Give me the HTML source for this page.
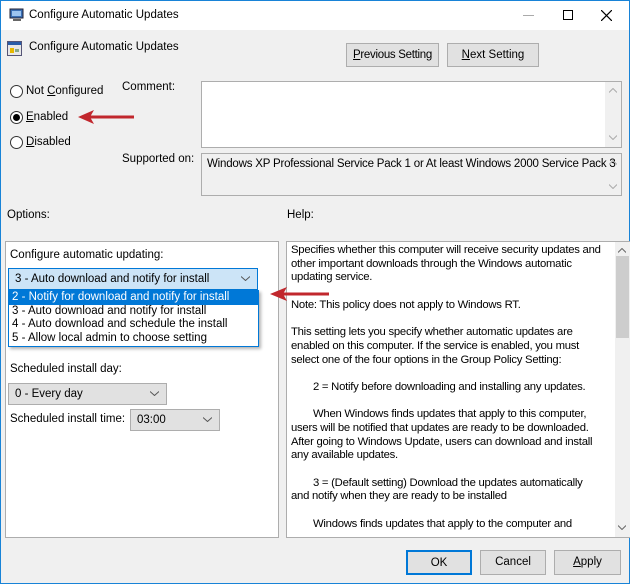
<!DOCTYPE html>
<html><head><style>
*{box-sizing:border-box}
body{margin:0;width:630px;height:584px;overflow:hidden;font-family:"Liberation Sans",sans-serif;font-size:11.5px;color:#000;background:#f0f0f0}
.a{position:absolute;white-space:nowrap}
.win{position:absolute;left:0;top:0;width:630px;height:584px;border:1px solid #1883d7;background:#f0f0f0}
.title{position:absolute;left:0;top:0;width:628px;height:29px;background:#fff}
.btn{position:absolute;background:#e1e1e1;border:1px solid #adadad;text-align:center;line-height:22px}
.box{position:absolute;border:1px solid #adadad;background:#fff;overflow:hidden}
.radio{position:absolute;width:13px;height:13px;border:1px solid #333;border-radius:50%;background:#fff}
.sel{position:absolute;background:#e1e1e1;border:1px solid #adadad;padding-left:6px;line-height:20px;white-space:nowrap}
.chev{position:absolute;right:7px;top:7px}
u{text-decoration:underline}
.help div{height:13.7px;line-height:13.7px;white-space:nowrap}
.in{padding-left:22px}
</style></head><body>
<div class="win">
<div class="title"></div>
<svg class="a" style="left:8px;top:7px" width="16" height="14"><rect x="1" y="1" width="13" height="9" fill="#3a6fb5" stroke="#223" stroke-width="1"/><rect x="3" y="3" width="9" height="5" fill="#9cc4f0"/><rect x="4" y="11" width="8" height="2" fill="#666"/></svg>
<div class="a" style="left:28px;top:8px">Configure Automatic Updates</div>
<div class="a" style="left:522px;top:14px;width:11px;border-top:1px solid #aaa"></div>
<div class="a" style="left:562px;top:9px;width:10px;height:10px;border:1px solid #000"></div>
<svg class="a" style="left:600px;top:9px" width="11" height="11"><path d="M0 0L11 11M11 0L0 11" stroke="#000" stroke-width="1.2"/></svg>

<svg class="a" style="left:6px;top:40px" width="15" height="15"><rect x="0.5" y="0.5" width="14" height="14" fill="#e8e8e8" stroke="#557"/><rect x="1" y="1" width="13" height="3" fill="#2a5da8"/><rect x="3" y="7" width="4" height="5" fill="#e6b800"/><rect x="8" y="8" width="4" height="3" fill="#8a8"/></svg>
<div class="a" style="left:28px;top:40px">Configure Automatic Updates</div>
<div class="btn" style="left:345px;top:42px;width:93px;height:24px;letter-spacing:-0.3px"><u>P</u>revious Setting</div>
<div class="btn" style="left:446px;top:42px;width:92px;height:24px"><u>N</u>ext Setting</div>

<div class="radio" style="left:9px;top:84px"></div><div class="a" style="left:25px;top:84px">Not <u>C</u>onfigured</div>
<div class="radio" style="left:9px;top:110px"></div><div class="a" style="left:12px;top:113px;width:7px;height:7px;border-radius:50%;background:#000"></div><div class="a" style="left:25px;top:110px"><u>E</u>nabled</div>
<div class="radio" style="left:9px;top:135px"></div><div class="a" style="left:25px;top:135px"><u>D</u>isabled</div>
<svg class="a" style="left:75px;top:106px" width="60" height="20"><path d="M58 10H10" stroke="#c1272d" stroke-width="3"/><path d="M2 10L18 3L14 10L18 17Z" fill="#c1272d"/></svg>

<div class="a" style="left:121px;top:80px">Comment:</div>
<div class="box" style="left:200px;top:80px;width:421px;height:67px"><div class="a" style="right:0;top:0;width:16px;height:65px;background:#f0f0f0"></div><svg class="a" style="right:4px;top:6px" width="8" height="5"><path d="M0 4.5L4 .5L8 4.5" fill="none" stroke="#aaa"/></svg><svg class="a" style="right:4px;top:53px" width="8" height="5"><path d="M0 .5L4 4.5L8 .5" fill="none" stroke="#aaa"/></svg></div>
<div class="a" style="left:121px;top:152px">Supported on:</div>
<div class="box" style="left:200px;top:152px;width:421px;height:43px;background:#f0f0f0"><div class="a" style="left:5px;top:4px;letter-spacing:-0.2px">Windows XP Professional Service Pack 1 or At least Windows 2000 Service Pack 3</div><svg class="a" style="right:4px;top:6px" width="8" height="5"><path d="M0 4.5L4 .5L8 4.5" fill="none" stroke="#aaa"/></svg><svg class="a" style="right:4px;top:30px" width="8" height="5"><path d="M0 .5L4 4.5L8 .5" fill="none" stroke="#aaa"/></svg></div>

<div class="a" style="left:6px;top:208px">Options:</div>
<div class="a" style="left:286px;top:208px">Help:</div>

<div class="box" style="left:4px;top:240px;width:274px;height:297px"></div>
<div class="a" style="left:9px;top:248px">Configure automatic updating:</div>
<div class="sel" style="left:7px;top:267px;width:250px;height:22px;background:#cce4f7;border-color:#0078d7">3 - Auto download and notify for install<svg class="chev" width="9" height="5"><path d="M0 .5L4.5 4.5L9 .5" fill="none" stroke="#555"/></svg></div>
<div class="a" style="left:7px;top:289px;width:251px;height:57px;background:#fff;border:1px solid #0078d7;box-shadow:2px 2px 3px rgba(0,0,0,.3);line-height:13.7px">
<div style="background:#0078d7;color:#fff;padding-left:3px">2 - Notify for download and notify for install</div>
<div style="padding-left:3px">3 - Auto download and notify for install</div>
<div style="padding-left:3px">4 - Auto download and schedule the install</div>
<div style="padding-left:3px">5 - Allow local admin to choose setting</div></div>
<div class="a" style="left:9px;top:362px">Scheduled install day:</div>
<div class="sel" style="left:7px;top:382px;width:159px;height:22px">0 - Every day<svg class="chev" width="9" height="5"><path d="M0 .5L4.5 4.5L9 .5" fill="none" stroke="#555"/></svg></div>
<div class="a" style="left:9px;top:412px">Scheduled install time:</div>
<div class="sel" style="left:129px;top:408px;width:90px;height:22px">03:00<svg class="chev" width="9" height="5"><path d="M0 .5L4.5 4.5L9 .5" fill="none" stroke="#555"/></svg></div>

<div class="box" style="left:285px;top:240px;width:345px;height:297px">
<div class="a help" style="left:4px;top:2px;letter-spacing:-0.25px;font-size:11.3px">
<div>Specifies whether this computer will receive security updates and</div>
<div>other important downloads through the Windows automatic</div>
<div>updating service.</div><div></div>
<div>Note: This policy does not apply to Windows RT.</div><div></div>
<div>This setting lets you specify whether automatic updates are</div>
<div>enabled on this computer. If the service is enabled, you must</div>
<div>select one of the four options in the Group Policy Setting:</div><div></div>
<div class="in">2 = Notify before downloading and installing any updates.</div><div></div>
<div class="in">When Windows finds updates that apply to this computer,</div>
<div>users will be notified that updates are ready to be downloaded.</div>
<div>After going to Windows Update, users can download and install</div>
<div>any available updates.</div><div></div>
<div class="in">3 = (Default setting) Download the updates automatically</div>
<div>and notify when they are ready to be installed</div><div></div>
<div class="in">Windows finds updates that apply to the computer and</div>
</div>
<div class="a" style="left:328px;top:0;width:15px;height:295px;background:#f0f0f0"></div>
<div class="a" style="left:329px;top:14px;width:13px;height:82px;background:#cdcdcd"></div>
<svg class="a" style="left:331px;top:6px" width="8" height="5"><path d="M0 4.5L4 .5L8 4.5" fill="none" stroke="#666"/></svg>
<svg class="a" style="left:331px;top:283px" width="8" height="5"><path d="M0 .5L4 4.5L8 .5" fill="none" stroke="#666"/></svg>
</div>
<svg class="a" style="left:268px;top:283px" width="62" height="20"><path d="M60 10H10" stroke="#c1272d" stroke-width="3"/><path d="M1 10L18 3L14 10L18 17Z" fill="#c1272d"/></svg>

<div class="btn" style="left:405px;top:549px;width:66px;height:25px;border:2px solid #0078d7">OK</div>
<div class="btn" style="left:479px;top:549px;width:66px;height:25px">Cancel</div>
<div class="btn" style="left:553px;top:549px;width:67px;height:25px"><u>A</u>pply</div>
</div>
</body></html>
